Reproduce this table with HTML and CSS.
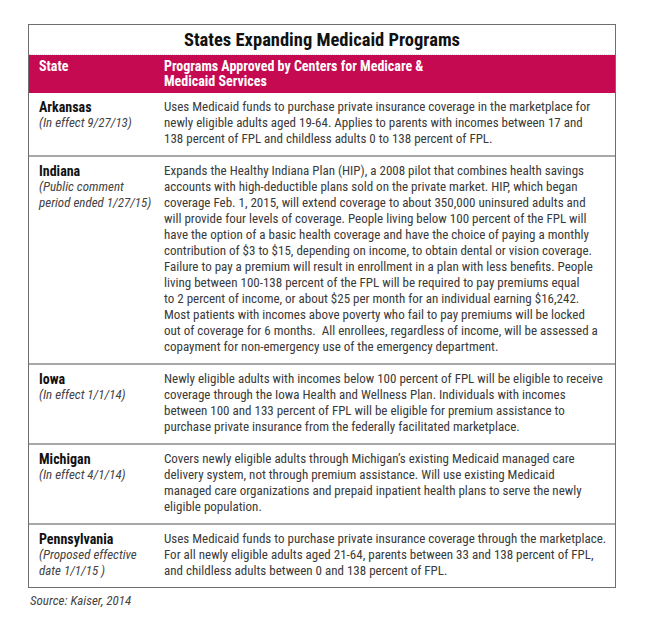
FILE: index.html
```html
<!DOCTYPE html>
<html>
<head>
<meta charset="utf-8">
<link rel="stylesheet" href="styles.css">
</head>
<body>
<div class="figure">
  <div class="table">
    <div class="title">States Expanding Medicaid Programs</div>
    <div class="row head">
      <div class="c1">State</div>
      <div class="c2">Programs Approved by Centers for Medicare &amp;<br>Medicaid Services</div>
    </div>
    <div class="row">
      <div class="c1"><div class="st">Arkansas</div><div class="dt">(In effect 9/27/13)</div></div>
      <div class="c2">Uses Medicaid funds to purchase private insurance coverage in the marketplace for<br>newly eligible adults aged 19-64. Applies to parents with incomes between 17 and<br>138 percent of FPL and childless adults 0 to 138 percent of FPL.</div>
    </div>
    <div class="row">
      <div class="c1"><div class="st">Indiana</div><div class="dt">(Public comment<br>period ended 1/27/15)</div></div>
      <div class="c2">Expands the Healthy Indiana Plan (HIP), a 2008 pilot that combines health savings<br>accounts with high-deductible plans sold on the private market. HIP, which began<br>coverage Feb. 1, 2015, will extend coverage to about 350,000 uninsured adults and<br>will provide four levels of coverage. People living below 100 percent of the FPL will<br>have the option of a basic health coverage and have the choice of paying a monthly<br>contribution of $3 to $15, depending on income, to obtain dental or vision coverage.<br>Failure to pay a premium will result in enrollment in a plan with less benefits. People<br>living between 100-138 percent of the FPL will be required to pay premiums equal<br>to 2 percent of income, or about $25 per month for an individual earning $16,242.<br>Most patients with incomes above poverty who fail to pay premiums will be locked<br>out of coverage for 6 months.&nbsp; All enrollees, regardless of income, will be assessed a<br>copayment for non-emergency use of the emergency department.</div>
    </div>
    <div class="row">
      <div class="c1"><div class="st">Iowa</div><div class="dt">(In effect 1/1/14)</div></div>
      <div class="c2">Newly eligible adults with incomes below 100 percent of FPL will be eligible to receive<br>coverage through the Iowa Health and Wellness Plan. Individuals with incomes<br>between 100 and 133 percent of FPL will be eligible for premium assistance to<br>purchase private insurance from the federally facilitated marketplace.</div>
    </div>
    <div class="row">
      <div class="c1"><div class="st">Michigan</div><div class="dt">(In effect 4/1/14)</div></div>
      <div class="c2">Covers newly eligible adults through Michigan’s existing Medicaid managed care<br>delivery system, not through premium assistance. Will use existing Medicaid<br>managed care organizations and prepaid inpatient health plans to serve the newly<br>eligible population.</div>
    </div>
    <div class="row last">
      <div class="c1"><div class="st">Pennsylvania</div><div class="dt">(Proposed effective<br>date 1/1/15 )</div></div>
      <div class="c2">Uses Medicaid funds to purchase private insurance coverage through the marketplace.<br>For all newly eligible adults aged 21-64, parents between 33 and 138 percent of FPL,<br>and childless adults between 0 and 138 percent of FPL.</div>
    </div>
  </div>
  <div class="source">Source: Kaiser, 2014</div>
</div>
</body>
</html>
```

FILE: styles.css
```css
html, body {
  margin: 0;
  padding: 0;
  background: #ffffff;
}
body {
  font-family: Roboto, "Liberation Sans", Arial, sans-serif;
  font-stretch: 75%;
  color: #3a3a3a;
}
.figure {
  padding: 24px 32px 0 28px;
}
.table {
  border: 1px solid #6e6e6e;
  width: 586px;
}
.title {
  height: 29px;
  line-height: 30px;
  text-align: center;
  font-weight: bold;
  font-size: 18.5px;
  color: #111111;
  border-bottom: 1px dotted #dcdcdc;
}
.row {
  display: grid;
  grid-template-columns: 125px 1fr;
  padding: 6px 10px 8px 10px;
  font-size: 13px;
  line-height: 16px;
  border-bottom: 2px solid #a8a8a8;
  white-space: nowrap;
}
.row.last {
  border-bottom: none;
}
.head {
  background: #c50a52;
  color: #ffffff;
  font-weight: bold;
  font-size: 14px;
  line-height: 15px;
  padding: 4px 10px 4px 10px;
  border-bottom: none;
}
.st {
  font-weight: bold;
  font-size: 14px;
  color: #111111;
}
.dt {
  font-style: italic;
  color: #444444;
}
.source {
  font-style: italic;
  font-size: 13px;
  color: #444444;
  margin-top: 5px;
  padding-left: 2px;
}
```
